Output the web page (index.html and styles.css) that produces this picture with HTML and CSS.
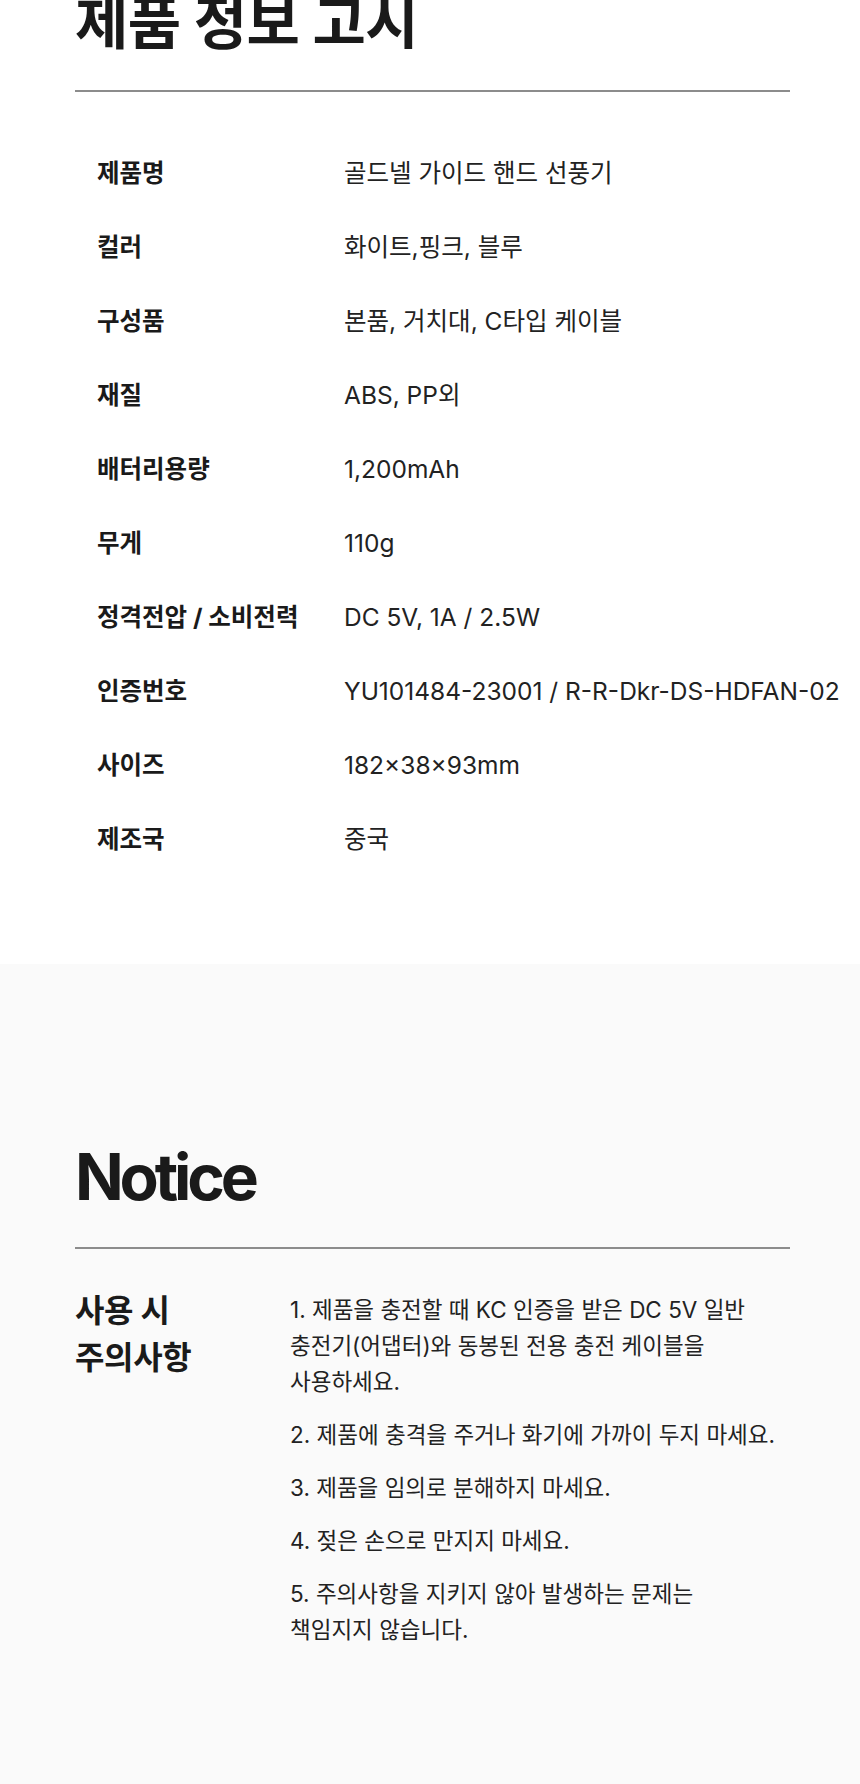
FILE: index.html
```html
<!DOCTYPE html>
<html lang="ko">
<head>
<meta charset="UTF-8">
<meta name="viewport" content="width=device-width, initial-scale=1">
<title>제품 정보 고시 / Notice</title>
<link rel="stylesheet" href="styles.css">
</head>
<body>
<section class="info">
<h2 class="sec-title">제품 정보 고시</h2>
<div class="spec">
<div class="spec-row"><span class="spec-label">제품명</span><span class="spec-value">골드넬 가이드 핸드 선풍기</span></div>
<div class="spec-row"><span class="spec-label">컬러</span><span class="spec-value">화이트,핑크, 블루</span></div>
<div class="spec-row"><span class="spec-label">구성품</span><span class="spec-value">본품, 거치대, C타입 케이블</span></div>
<div class="spec-row"><span class="spec-label">재질</span><span class="spec-value">ABS, PP외</span></div>
<div class="spec-row"><span class="spec-label">배터리용량</span><span class="spec-value">1,200mAh</span></div>
<div class="spec-row"><span class="spec-label">무게</span><span class="spec-value">110g</span></div>
<div class="spec-row"><span class="spec-label">정격전압 / 소비전력</span><span class="spec-value">DC 5V, 1A / 2.5W</span></div>
<div class="spec-row"><span class="spec-label">인증번호</span><span class="spec-value">YU101484-23001 / R-R-Dkr-DS-HDFAN-02</span></div>
<div class="spec-row"><span class="spec-label">사이즈</span><span class="spec-value">182×38×93mm</span></div>
<div class="spec-row"><span class="spec-label">제조국</span><span class="spec-value">중국</span></div>
</div>
</section>
<section class="notice">
<h2 class="sec-title">Notice</h2>
<div class="notice-body">
<h3 class="notice-label">사용 시<br>주의사항</h3>
<ol class="notice-list">
<li>1. 제품을 충전할 때 KC 인증을 받은 DC 5V 일반 충전기(어댑터)와 동봉된 전용 충전 케이블을 사용하세요.</li>
<li>2. 제품에 충격을 주거나 화기에 가까이 두지 마세요.</li>
<li>3. 제품을 임의로 분해하지 마세요.</li>
<li>4. 젖은 손으로 만지지 마세요.</li>
<li>5. 주의사항을 지키지 않아 발생하는 문제는<br>책임지지 않습니다.</li>
</ol>
</div>
</section>
</body>
</html>
```

FILE: styles.css
```css
body {
  margin: 0;
  font-family: Inter, "Noto Sans CJK KR", sans-serif;
  color: #1a1a1a;
  background: #ffffff;
  word-break: keep-all;
}
.info {
  padding: 0 70px 88px 75px;
  overflow: hidden;
}
.sec-title {
  margin: 0 0 31px;
  font-size: 64px;
  line-height: 1.2;
  font-weight: 700;
  letter-spacing: -0.065em;
}
.info .sec-title {
  margin-top: -11px;
  font-size: 58px;
  letter-spacing: -0.01em;
}
.spec {
  border-top: 2px solid #8c8c8c;
  padding: 44px 22px 0;
}
.spec-row {
  display: grid;
  grid-template-columns: 247px 1fr;
  line-height: 74px;
  font-size: 24.5px;
}
.spec-label {
  font-weight: 700;
  color: #1a1a1a;
}
.spec-value {
  white-space: nowrap;
  color: #222;
}
.notice {
  background: #fafafa;
  padding: 175px 70px 140px 75px;
}
.notice .sec-title {
  margin-bottom: 32px;
}
.notice-body {
  border-top: 2px solid #8c8c8c;
  padding-top: 38px;
  display: grid;
  grid-template-columns: 215px 1fr;
  align-items: start;
}
.notice-label {
  margin: 0;
  font-size: 32px;
  line-height: 47px;
  font-weight: 700;
  letter-spacing: -0.01em;
}
.notice-list {
  list-style: none;
  margin: 5px 0 0;
  padding: 0;
  width: 490px;
  font-size: 22.5px;
  line-height: 36px;
  color: #222;
}
.notice-list li {
  margin-bottom: 17px;
}
.notice-list li:last-child {
  margin-bottom: 0;
}
```
